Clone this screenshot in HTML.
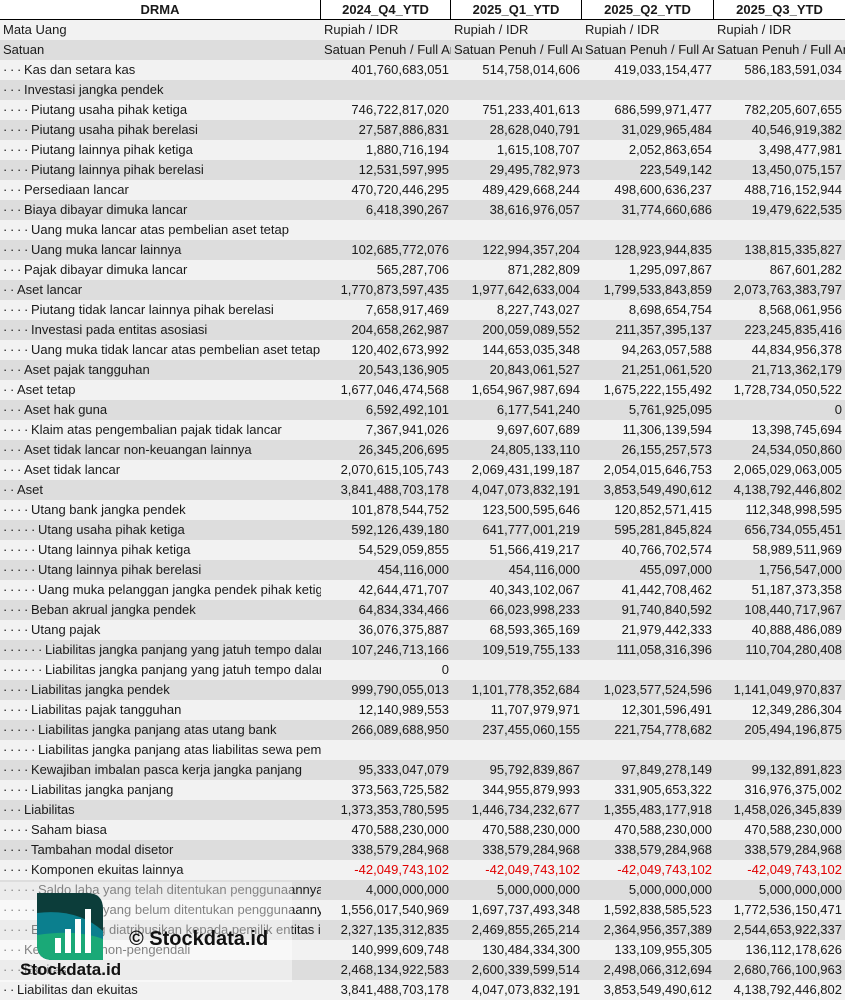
<!DOCTYPE html>
<html><head><meta charset="utf-8"><style>
*{margin:0;padding:0;box-sizing:border-box}
body{width:845px;height:1001px;overflow:hidden;background:#fff;font-family:"Liberation Sans",Arial,sans-serif;font-size:13px;color:#1a1a1a;position:relative}
.r{display:flex;height:20px;line-height:20px;white-space:nowrap}
.r:nth-child(odd){background:#f2f2f2}
.r:nth-child(even){background:#dddddd}
.r>div{overflow:hidden}
.l{width:321px;padding-left:3px}
.a{width:130px;text-align:right;padding-right:2px}
.b{width:131px;text-align:right;padding-right:2px}
.c{width:132px;text-align:right;padding-right:2px}
.d{width:131px;text-align:right;padding-right:3px}
.t div{text-align:left;padding-left:3px}
.d1:before{content:"·";display:inline-block;width:7px}
.n{color:#e00000}
.h{display:flex;height:21px;line-height:20px;font-weight:bold;background:#fff;border-bottom:2px solid #000}
.h div{text-align:center;border-right:1px solid #000}
.h div:last-child{border-right:none}
i{font-style:normal;display:inline-block;width:7px;text-align:left}
</style></head><body>
<div class="h"><div style="width:321px">DRMA</div><div style="width:130px">2024_Q4_YTD</div><div style="width:131px">2025_Q1_YTD</div><div style="width:132px">2025_Q2_YTD</div><div style="width:131px">2025_Q3_YTD</div></div>
<div style="position:absolute;top:20px;left:0;width:845px">
<div class="r t"><div class="l">Mata Uang</div><div class="a">Rupiah / IDR</div><div class="b">Rupiah / IDR</div><div class="c">Rupiah / IDR</div><div class="d">Rupiah / IDR</div></div>
<div class="r t"><div class="l">Satuan</div><div class="a">Satuan Penuh / Full Amount</div><div class="b">Satuan Penuh / Full Amount</div><div class="c">Satuan Penuh / Full Amount</div><div class="d">Satuan Penuh / Full Amount</div></div>
<div class="r"><div class="l"><i>·</i><i>·</i><i>·</i>Kas dan setara kas</div><div class="a">401,760,683,051</div><div class="b">514,758,014,606</div><div class="c">419,033,154,477</div><div class="d">586,183,591,034</div></div>
<div class="r"><div class="l"><i>·</i><i>·</i><i>·</i>Investasi jangka pendek</div><div class="a"></div><div class="b"></div><div class="c"></div><div class="d"></div></div>
<div class="r"><div class="l"><i>·</i><i>·</i><i>·</i><i>·</i>Piutang usaha pihak ketiga</div><div class="a">746,722,817,020</div><div class="b">751,233,401,613</div><div class="c">686,599,971,477</div><div class="d">782,205,607,655</div></div>
<div class="r"><div class="l"><i>·</i><i>·</i><i>·</i><i>·</i>Piutang usaha pihak berelasi</div><div class="a">27,587,886,831</div><div class="b">28,628,040,791</div><div class="c">31,029,965,484</div><div class="d">40,546,919,382</div></div>
<div class="r"><div class="l"><i>·</i><i>·</i><i>·</i><i>·</i>Piutang lainnya pihak ketiga</div><div class="a">1,880,716,194</div><div class="b">1,615,108,707</div><div class="c">2,052,863,654</div><div class="d">3,498,477,981</div></div>
<div class="r"><div class="l"><i>·</i><i>·</i><i>·</i><i>·</i>Piutang lainnya pihak berelasi</div><div class="a">12,531,597,995</div><div class="b">29,495,782,973</div><div class="c">223,549,142</div><div class="d">13,450,075,157</div></div>
<div class="r"><div class="l"><i>·</i><i>·</i><i>·</i>Persediaan lancar</div><div class="a">470,720,446,295</div><div class="b">489,429,668,244</div><div class="c">498,600,636,237</div><div class="d">488,716,152,944</div></div>
<div class="r"><div class="l"><i>·</i><i>·</i><i>·</i>Biaya dibayar dimuka lancar</div><div class="a">6,418,390,267</div><div class="b">38,616,976,057</div><div class="c">31,774,660,686</div><div class="d">19,479,622,535</div></div>
<div class="r"><div class="l"><i>·</i><i>·</i><i>·</i><i>·</i>Uang muka lancar atas pembelian aset tetap</div><div class="a"></div><div class="b"></div><div class="c"></div><div class="d"></div></div>
<div class="r"><div class="l"><i>·</i><i>·</i><i>·</i><i>·</i>Uang muka lancar lainnya</div><div class="a">102,685,772,076</div><div class="b">122,994,357,204</div><div class="c">128,923,944,835</div><div class="d">138,815,335,827</div></div>
<div class="r"><div class="l"><i>·</i><i>·</i><i>·</i>Pajak dibayar dimuka lancar</div><div class="a">565,287,706</div><div class="b">871,282,809</div><div class="c">1,295,097,867</div><div class="d">867,601,282</div></div>
<div class="r"><div class="l"><i>·</i><i>·</i>Aset lancar</div><div class="a">1,770,873,597,435</div><div class="b">1,977,642,633,004</div><div class="c">1,799,533,843,859</div><div class="d">2,073,763,383,797</div></div>
<div class="r"><div class="l"><i>·</i><i>·</i><i>·</i><i>·</i>Piutang tidak lancar lainnya pihak berelasi</div><div class="a">7,658,917,469</div><div class="b">8,227,743,027</div><div class="c">8,698,654,754</div><div class="d">8,568,061,956</div></div>
<div class="r"><div class="l"><i>·</i><i>·</i><i>·</i><i>·</i>Investasi pada entitas asosiasi</div><div class="a">204,658,262,987</div><div class="b">200,059,089,552</div><div class="c">211,357,395,137</div><div class="d">223,245,835,416</div></div>
<div class="r"><div class="l"><i>·</i><i>·</i><i>·</i><i>·</i>Uang muka tidak lancar atas pembelian aset tetap</div><div class="a">120,402,673,992</div><div class="b">144,653,035,348</div><div class="c">94,263,057,588</div><div class="d">44,834,956,378</div></div>
<div class="r"><div class="l"><i>·</i><i>·</i><i>·</i>Aset pajak tangguhan</div><div class="a">20,543,136,905</div><div class="b">20,843,061,527</div><div class="c">21,251,061,520</div><div class="d">21,713,362,179</div></div>
<div class="r"><div class="l"><i>·</i><i>·</i>Aset tetap</div><div class="a">1,677,046,474,568</div><div class="b">1,654,967,987,694</div><div class="c">1,675,222,155,492</div><div class="d">1,728,734,050,522</div></div>
<div class="r"><div class="l"><i>·</i><i>·</i><i>·</i>Aset hak guna</div><div class="a">6,592,492,101</div><div class="b">6,177,541,240</div><div class="c">5,761,925,095</div><div class="d">0</div></div>
<div class="r"><div class="l"><i>·</i><i>·</i><i>·</i><i>·</i>Klaim atas pengembalian pajak tidak lancar</div><div class="a">7,367,941,026</div><div class="b">9,697,607,689</div><div class="c">11,306,139,594</div><div class="d">13,398,745,694</div></div>
<div class="r"><div class="l"><i>·</i><i>·</i><i>·</i>Aset tidak lancar non-keuangan lainnya</div><div class="a">26,345,206,695</div><div class="b">24,805,133,110</div><div class="c">26,155,257,573</div><div class="d">24,534,050,860</div></div>
<div class="r"><div class="l"><i>·</i><i>·</i><i>·</i>Aset tidak lancar</div><div class="a">2,070,615,105,743</div><div class="b">2,069,431,199,187</div><div class="c">2,054,015,646,753</div><div class="d">2,065,029,063,005</div></div>
<div class="r"><div class="l"><i>·</i><i>·</i>Aset</div><div class="a">3,841,488,703,178</div><div class="b">4,047,073,832,191</div><div class="c">3,853,549,490,612</div><div class="d">4,138,792,446,802</div></div>
<div class="r"><div class="l"><i>·</i><i>·</i><i>·</i><i>·</i>Utang bank jangka pendek</div><div class="a">101,878,544,752</div><div class="b">123,500,595,646</div><div class="c">120,852,571,415</div><div class="d">112,348,998,595</div></div>
<div class="r"><div class="l"><i>·</i><i>·</i><i>·</i><i>·</i><i>·</i>Utang usaha pihak ketiga</div><div class="a">592,126,439,180</div><div class="b">641,777,001,219</div><div class="c">595,281,845,824</div><div class="d">656,734,055,451</div></div>
<div class="r"><div class="l"><i>·</i><i>·</i><i>·</i><i>·</i><i>·</i>Utang lainnya pihak ketiga</div><div class="a">54,529,059,855</div><div class="b">51,566,419,217</div><div class="c">40,766,702,574</div><div class="d">58,989,511,969</div></div>
<div class="r"><div class="l"><i>·</i><i>·</i><i>·</i><i>·</i><i>·</i>Utang lainnya pihak berelasi</div><div class="a">454,116,000</div><div class="b">454,116,000</div><div class="c">455,097,000</div><div class="d">1,756,547,000</div></div>
<div class="r"><div class="l"><i>·</i><i>·</i><i>·</i><i>·</i><i>·</i>Uang muka pelanggan jangka pendek pihak ketiga</div><div class="a">42,644,471,707</div><div class="b">40,343,102,067</div><div class="c">41,442,708,462</div><div class="d">51,187,373,358</div></div>
<div class="r"><div class="l"><i>·</i><i>·</i><i>·</i><i>·</i>Beban akrual jangka pendek</div><div class="a">64,834,334,466</div><div class="b">66,023,998,233</div><div class="c">91,740,840,592</div><div class="d">108,440,717,967</div></div>
<div class="r"><div class="l"><i>·</i><i>·</i><i>·</i><i>·</i>Utang pajak</div><div class="a">36,076,375,887</div><div class="b">68,593,365,169</div><div class="c">21,979,442,333</div><div class="d">40,888,486,089</div></div>
<div class="r"><div class="l"><i>·</i><i>·</i><i>·</i><i>·</i><i>·</i><i>·</i>Liabilitas jangka panjang yang jatuh tempo dalam</div><div class="a">107,246,713,166</div><div class="b">109,519,755,133</div><div class="c">111,058,316,396</div><div class="d">110,704,280,408</div></div>
<div class="r"><div class="l"><i>·</i><i>·</i><i>·</i><i>·</i><i>·</i><i>·</i>Liabilitas jangka panjang yang jatuh tempo dalam</div><div class="a">0</div><div class="b"></div><div class="c"></div><div class="d"></div></div>
<div class="r"><div class="l"><i>·</i><i>·</i><i>·</i><i>·</i>Liabilitas jangka pendek</div><div class="a">999,790,055,013</div><div class="b">1,101,778,352,684</div><div class="c">1,023,577,524,596</div><div class="d">1,141,049,970,837</div></div>
<div class="r"><div class="l"><i>·</i><i>·</i><i>·</i><i>·</i>Liabilitas pajak tangguhan</div><div class="a">12,140,989,553</div><div class="b">11,707,979,971</div><div class="c">12,301,596,491</div><div class="d">12,349,286,304</div></div>
<div class="r"><div class="l"><i>·</i><i>·</i><i>·</i><i>·</i><i>·</i>Liabilitas jangka panjang atas utang bank</div><div class="a">266,089,688,950</div><div class="b">237,455,060,155</div><div class="c">221,754,778,682</div><div class="d">205,494,196,875</div></div>
<div class="r"><div class="l"><i>·</i><i>·</i><i>·</i><i>·</i><i>·</i>Liabilitas jangka panjang atas liabilitas sewa pembiayaan</div><div class="a"></div><div class="b"></div><div class="c"></div><div class="d"></div></div>
<div class="r"><div class="l"><i>·</i><i>·</i><i>·</i><i>·</i>Kewajiban imbalan pasca kerja jangka panjang</div><div class="a">95,333,047,079</div><div class="b">95,792,839,867</div><div class="c">97,849,278,149</div><div class="d">99,132,891,823</div></div>
<div class="r"><div class="l"><i>·</i><i>·</i><i>·</i><i>·</i>Liabilitas jangka panjang</div><div class="a">373,563,725,582</div><div class="b">344,955,879,993</div><div class="c">331,905,653,322</div><div class="d">316,976,375,002</div></div>
<div class="r"><div class="l"><i>·</i><i>·</i><i>·</i>Liabilitas</div><div class="a">1,373,353,780,595</div><div class="b">1,446,734,232,677</div><div class="c">1,355,483,177,918</div><div class="d">1,458,026,345,839</div></div>
<div class="r"><div class="l"><i>·</i><i>·</i><i>·</i><i>·</i>Saham biasa</div><div class="a">470,588,230,000</div><div class="b">470,588,230,000</div><div class="c">470,588,230,000</div><div class="d">470,588,230,000</div></div>
<div class="r"><div class="l"><i>·</i><i>·</i><i>·</i><i>·</i>Tambahan modal disetor</div><div class="a">338,579,284,968</div><div class="b">338,579,284,968</div><div class="c">338,579,284,968</div><div class="d">338,579,284,968</div></div>
<div class="r"><div class="l"><i>·</i><i>·</i><i>·</i><i>·</i>Komponen ekuitas lainnya</div><div class="a n">-42,049,743,102</div><div class="b n">-42,049,743,102</div><div class="c n">-42,049,743,102</div><div class="d n">-42,049,743,102</div></div>
<div class="r"><div class="l"><i>·</i><i>·</i><i>·</i><i>·</i><i>·</i>Saldo laba yang telah ditentukan penggunaannya</div><div class="a">4,000,000,000</div><div class="b">5,000,000,000</div><div class="c">5,000,000,000</div><div class="d">5,000,000,000</div></div>
<div class="r"><div class="l"><i>·</i><i>·</i><i>·</i><i>·</i><i>·</i>Saldo laba yang belum ditentukan penggunaannya</div><div class="a">1,556,017,540,969</div><div class="b">1,697,737,493,348</div><div class="c">1,592,838,585,523</div><div class="d">1,772,536,150,471</div></div>
<div class="r"><div class="l"><i>·</i><i>·</i><i>·</i><i>·</i>Ekuitas yang diatribusikan kepada pemilik entitas induk</div><div class="a">2,327,135,312,835</div><div class="b">2,469,855,265,214</div><div class="c">2,364,956,357,389</div><div class="d">2,544,653,922,337</div></div>
<div class="r"><div class="l"><i>·</i><i>·</i><i>·</i>Kepentingan non-pengendali</div><div class="a">140,999,609,748</div><div class="b">130,484,334,300</div><div class="c">133,109,955,305</div><div class="d">136,112,178,626</div></div>
<div class="r"><div class="l"><i>·</i><i>·</i><i>·</i>Ekuitas</div><div class="a">2,468,134,922,583</div><div class="b">2,600,339,599,514</div><div class="c">2,498,066,312,694</div><div class="d">2,680,766,100,963</div></div>
<div class="r"><div class="l"><i>·</i><i>·</i>Liabilitas dan ekuitas</div><div class="a">3,841,488,703,178</div><div class="b">4,047,073,832,191</div><div class="c">3,853,549,490,612</div><div class="d">4,138,792,446,802</div></div>
</div>
<div style="position:absolute;left:0;top:882px;width:292px;height:100px;background:rgba(255,255,255,0.45)"></div>
<svg style="position:absolute;left:37px;top:893px" width="66" height="67" viewBox="0 0 66 67">
<defs><clipPath id="cp"><path d="M0 0H50Q66 0 66 16V67H16Q0 67 0 51Z"/></clipPath></defs>
<g clip-path="url(#cp)">
<rect width="66" height="67" fill="#0c3d3a"/>
<path d="M0 20Q40 15 66 38V67H0Z" fill="#0b7f8e"/>
<path d="M0 42Q40 36 66 46V67H0Z" fill="#1aa977"/>
</g>
<rect x="18" y="45" width="6" height="15" fill="#fff"/>
<rect x="28" y="36" width="6" height="24" fill="#fff"/>
<rect x="38" y="26" width="6" height="34" fill="#fff"/>
<rect x="48" y="16" width="6" height="44" fill="#fff"/>
</svg>
<div style="position:absolute;left:129px;top:927px;font-size:20px;font-weight:bold;color:#111;line-height:24px">© Stockdata.id</div>
<div style="position:absolute;left:20px;top:960px;font-size:17px;font-weight:bold;color:#111;line-height:20px">Stockdata.id</div>
</body></html>
